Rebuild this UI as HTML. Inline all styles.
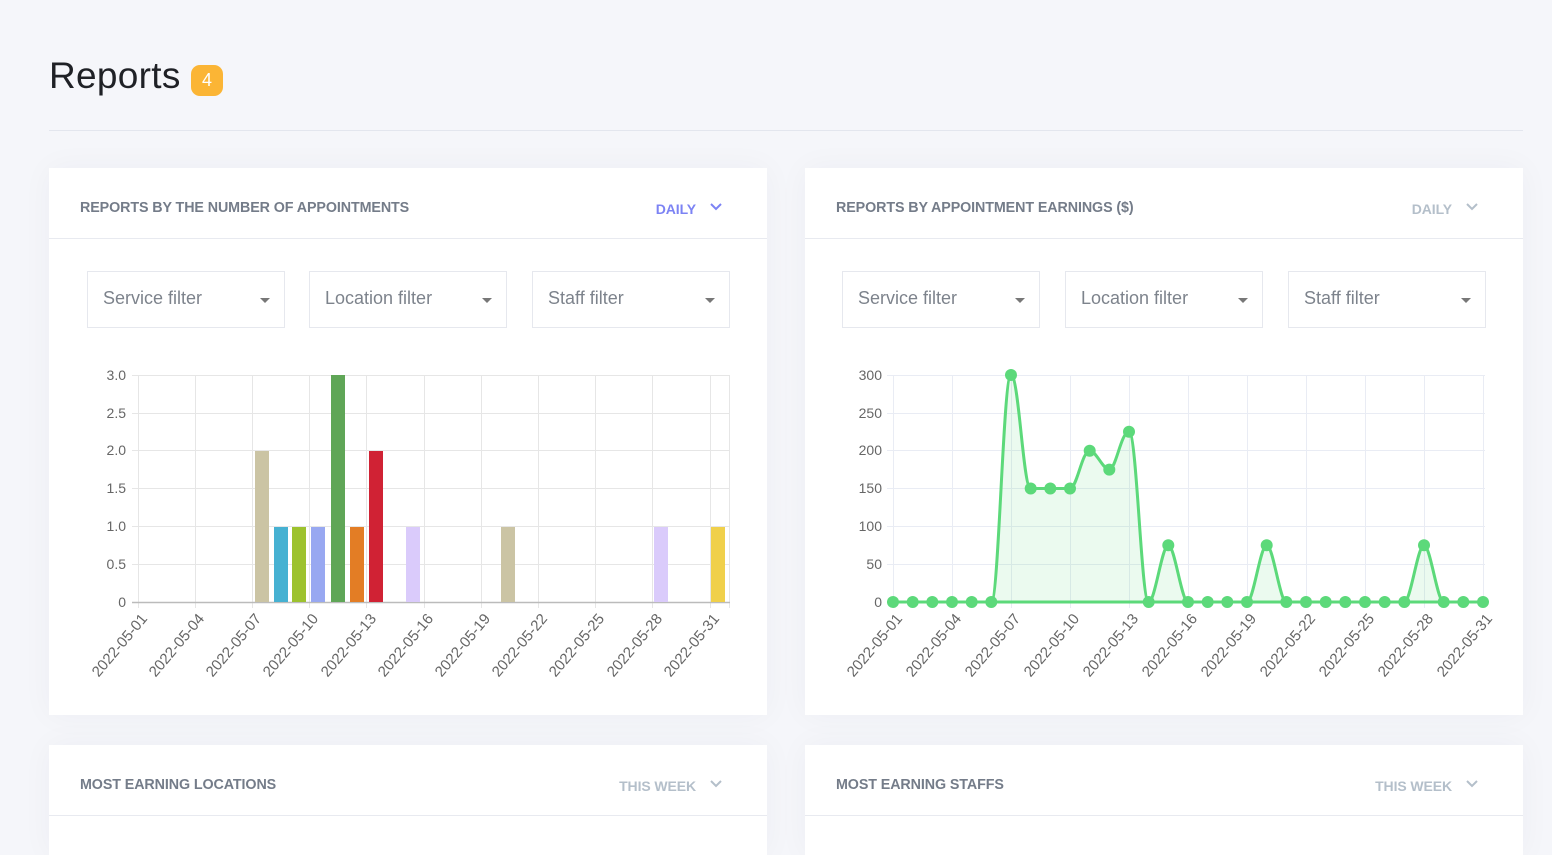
<!DOCTYPE html>
<html><head><meta charset="utf-8">
<style>
*{box-sizing:border-box;margin:0;padding:0}
body{width:1552px;height:843px;overflow:hidden;background:#f5f6fa;font-family:"Liberation Sans",sans-serif;position:relative}
.h1{position:absolute;left:49px;top:55px;font-size:37px;color:#1f2126;letter-spacing:0.3px}
.badge{position:absolute;left:191px;top:65px;width:32px;height:31px;border-radius:9px;background:#fbb535;color:#fff;font-size:18px;text-align:center;line-height:31px}
.divider{position:absolute;left:49px;top:130px;width:1474px;height:1px;background:#e3e6ee}
.card{position:absolute;background:#fff;width:718px;box-shadow:0 0 30px rgba(40,50,80,0.04)}
.ch{height:71px;border-bottom:1px solid #e8eaf0;position:relative}
.ct{position:absolute;left:31px;top:32px;font-size:14.3px;font-weight:bold;color:#747c89;letter-spacing:-0.1px}
.dd{position:absolute;right:71px;top:33px;font-size:14px;font-weight:bold;color:#b4bfca;letter-spacing:-0.1px}
.dd.a{color:#7c83f4}
.dd svg{position:absolute;left:100%;top:-1px;margin-left:13px}
.f{position:absolute;top:103px;width:198px;height:57px;border:1px solid #e6e8ee;font-size:18px;color:#7d838c;padding:16px 0 0 15px}
.f:after{content:"";position:absolute;right:14px;top:26px;border-left:5px solid transparent;border-right:5px solid transparent;border-top:5px solid #777}
svg text{font-family:"Liberation Sans",sans-serif;font-size:14px;fill:#666}
.xl text{font-size:15px}
</style></head><body>
<div class="h1">Reports</div><div class="badge">4</div>
<div class="divider"></div>

<div class="card" style="left:49px;top:168px;height:547px">
 <div class="ch"><div class="ct">REPORTS BY THE NUMBER OF APPOINTMENTS</div>
 <div class="dd a">DAILY<svg width="14" height="14" viewBox="0 0 14 14"><path d="M2 4l5 5 5-5" fill="none" stroke="#7c83f4" stroke-width="2"/></svg></div></div>
 <div class="f" style="left:38px">Service filter</div>
 <div class="f" style="left:260px">Location filter</div>
 <div class="f" style="left:483px">Staff filter</div>
</div>
<div class="card" style="left:805px;top:168px;height:547px">
 <div class="ch"><div class="ct">REPORTS BY APPOINTMENT EARNINGS ($)</div>
 <div class="dd">DAILY<svg width="14" height="14" viewBox="0 0 14 14"><path d="M2 4l5 5 5-5" fill="none" stroke="#b4bfca" stroke-width="2"/></svg></div></div>
 <div class="f" style="left:37px">Service filter</div>
 <div class="f" style="left:260px">Location filter</div>
 <div class="f" style="left:483px">Staff filter</div>
</div>
<div class="card" style="left:49px;top:745px;height:110px">
 <div class="ch"><div class="ct">MOST EARNING LOCATIONS</div>
 <div class="dd">THIS WEEK<svg width="14" height="14" viewBox="0 0 14 14"><path d="M2 4l5 5 5-5" fill="none" stroke="#b4bfca" stroke-width="2"/></svg></div></div>
</div>
<div class="card" style="left:805px;top:745px;height:110px">
 <div class="ch"><div class="ct">MOST EARNING STAFFS</div>
 <div class="dd">THIS WEEK<svg width="14" height="14" viewBox="0 0 14 14"><path d="M2 4l5 5 5-5" fill="none" stroke="#b4bfca" stroke-width="2"/></svg></div></div>
</div>

<svg style="position:absolute;left:0;top:0" width="1552" height="843">
<g stroke="#e6e6e6" stroke-width="1">
 <path d="M132 375.5H730M132 413.5H730M132 450.5H730M132 488.5H730M132 526.5H730M132 564.5H730"/>
 <path d="M138.5 375V608M195.5 375V608M252.5 375V608M309.5 375V608M366.5 375V608M424.5 375V608M481.5 375V608M538.5 375V608M595.5 375V608M652.5 375V608M710.5 375V608M729.5 375V608"/>
 <path d="M887 375.5H1485M887 413.5H1485M887 450.5H1485M887 488.5H1485M887 526.5H1485M887 564.5H1485" stroke="#e9ecf4"/>
 <path d="M893.5 375V608M952.5 375V608M1011.5 375V608M1070.5 375V608M1129.5 375V608M1188.5 375V608M1247.5 375V608M1306.5 375V608M1365.5 375V608M1424.5 375V608M1483.5 375V608" stroke="#e9ecf4"/>
</g>
<path d="M132 602.5H730M887 602.5H1485" stroke="#bbb" stroke-width="1.5"/>
<g text-anchor="end">
 <text x="126" y="380">3.0</text><text x="126" y="418">2.5</text><text x="126" y="455">2.0</text><text x="126" y="493">1.5</text><text x="126" y="531">1.0</text><text x="126" y="569">0.5</text><text x="126" y="607">0</text>
 <text x="882" y="380">300</text><text x="882" y="418">250</text><text x="882" y="455">200</text><text x="882" y="493">150</text><text x="882" y="531">100</text><text x="882" y="569">50</text><text x="882" y="607">0</text>
</g>
<g>
 <rect x="255" y="451" width="14" height="151" fill="#cbc4a4"/>
 <rect x="274" y="527" width="14" height="75" fill="#46b1d2"/>
 <rect x="292" y="527" width="14" height="75" fill="#9dc22e"/>
 <rect x="311" y="527" width="14" height="75" fill="#98a8f1"/>
 <rect x="331" y="375" width="14" height="227" fill="#5fa657"/>
 <rect x="350" y="527" width="14" height="75" fill="#e37d25"/>
 <rect x="369" y="451" width="14" height="151" fill="#d02234"/>
 <rect x="406" y="527" width="14" height="75" fill="#dacbfb"/>
 <rect x="501" y="527" width="14" height="75" fill="#cbc4a4"/>
 <rect x="654" y="527" width="14" height="75" fill="#dacbfb"/>
 <rect x="711" y="527" width="14" height="75" fill="#f0d04b"/>
</g>
<g text-anchor="end" class="xl">
 <text transform="translate(148,619) rotate(-50)">2022-05-01</text>
 <text transform="translate(205,619) rotate(-50)">2022-05-04</text>
 <text transform="translate(262,619) rotate(-50)">2022-05-07</text>
 <text transform="translate(319,619) rotate(-50)">2022-05-10</text>
 <text transform="translate(377,619) rotate(-50)">2022-05-13</text>
 <text transform="translate(434,619) rotate(-50)">2022-05-16</text>
 <text transform="translate(491,619) rotate(-50)">2022-05-19</text>
 <text transform="translate(548,619) rotate(-50)">2022-05-22</text>
 <text transform="translate(605,619) rotate(-50)">2022-05-25</text>
 <text transform="translate(663,619) rotate(-50)">2022-05-28</text>
 <text transform="translate(720,619) rotate(-50)">2022-05-31</text>
 <text transform="translate(903,619) rotate(-50)">2022-05-01</text>
 <text transform="translate(962,619) rotate(-50)">2022-05-04</text>
 <text transform="translate(1021,619) rotate(-50)">2022-05-07</text>
 <text transform="translate(1080,619) rotate(-50)">2022-05-10</text>
 <text transform="translate(1139,619) rotate(-50)">2022-05-13</text>
 <text transform="translate(1198,619) rotate(-50)">2022-05-16</text>
 <text transform="translate(1257,619) rotate(-50)">2022-05-19</text>
 <text transform="translate(1316,619) rotate(-50)">2022-05-22</text>
 <text transform="translate(1375,619) rotate(-50)">2022-05-25</text>
 <text transform="translate(1434,619) rotate(-50)">2022-05-28</text>
 <text transform="translate(1493,619) rotate(-50)">2022-05-31</text>
</g>
<path d="M893,602 L991.3,602 C999,602 1003,375 1011,375 C1019,375 1023,488.5 1030.7,488.5 L1070,488.5 C1077,488.5 1082,450.7 1089.7,450.7 C1096.2,450.7 1102.8,469.6 1109.3,469.6 C1116,469.6 1121,431.7 1129,431.7 C1137,431.7 1141,602 1148.7,602 C1155.2,602 1161.8,545.2 1168.3,545.2 C1174.8,545.2 1181.5,602 1188,602 L1247,602 C1253.5,602 1260.2,545.2 1266.7,545.2 C1273.2,545.2 1279.8,602 1286.3,602 L1404.3,602 C1410.8,602 1417.5,545.2 1424,545.2 C1430.5,545.2 1437.2,602 1443.7,602 L1483,602 Z" fill="rgba(92,217,122,0.12)" stroke="#5cd97a" stroke-width="3"/>
<g fill="#5cd97a">
 <circle cx="893" cy="602" r="6"/><circle cx="912.7" cy="602" r="6"/><circle cx="932.3" cy="602" r="6"/><circle cx="952" cy="602" r="6"/><circle cx="971.7" cy="602" r="6"/><circle cx="991.3" cy="602" r="6"/>
 <circle cx="1011" cy="375" r="6"/><circle cx="1030.7" cy="488.5" r="6"/><circle cx="1050.3" cy="488.5" r="6"/><circle cx="1070" cy="488.5" r="6"/><circle cx="1089.7" cy="450.7" r="6"/><circle cx="1109.3" cy="469.6" r="6"/><circle cx="1129" cy="431.7" r="6"/>
 <circle cx="1148.7" cy="602" r="6"/><circle cx="1168.3" cy="545.2" r="6"/><circle cx="1188" cy="602" r="6"/><circle cx="1207.7" cy="602" r="6"/><circle cx="1227.3" cy="602" r="6"/><circle cx="1247" cy="602" r="6"/>
 <circle cx="1266.7" cy="545.2" r="6"/><circle cx="1286.3" cy="602" r="6"/><circle cx="1306" cy="602" r="6"/><circle cx="1325.7" cy="602" r="6"/><circle cx="1345.3" cy="602" r="6"/><circle cx="1365" cy="602" r="6"/><circle cx="1384.7" cy="602" r="6"/><circle cx="1404.3" cy="602" r="6"/>
 <circle cx="1424" cy="545.2" r="6"/><circle cx="1443.7" cy="602" r="6"/><circle cx="1463.3" cy="602" r="6"/><circle cx="1483" cy="602" r="6"/>
</g>
</svg>
</body></html>
